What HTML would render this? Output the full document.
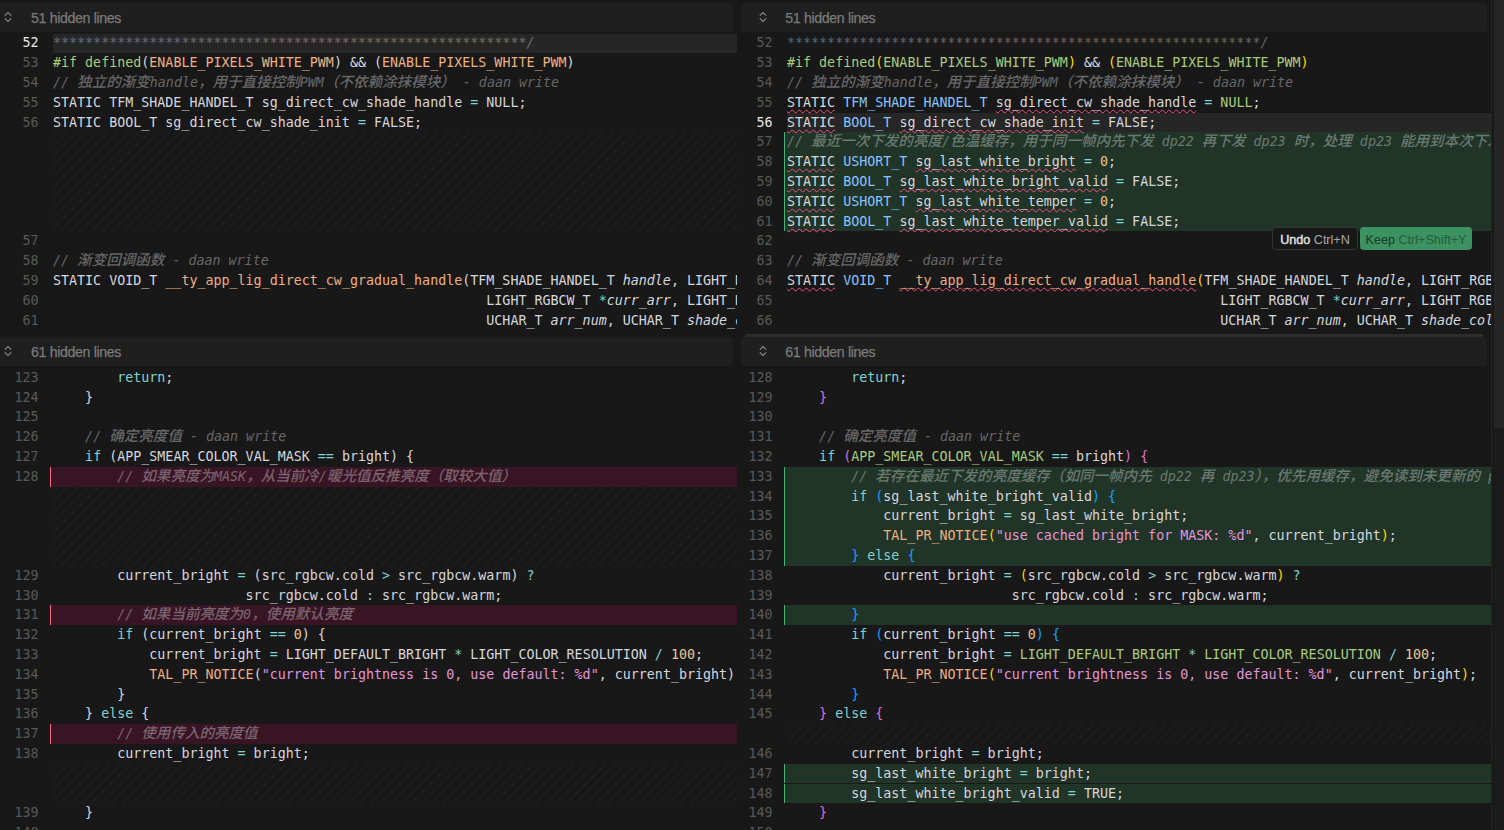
<!DOCTYPE html>
<html lang="zh"><head><meta charset="utf-8"><title>diff</title><style>
html,body{margin:0;padding:0;background:#181818;}
body{width:1504px;height:830px;overflow:hidden;position:relative;font-family:"DejaVu Sans Mono","Liberation Mono",monospace;}
.pane{position:absolute;top:0;height:830px;overflow:hidden;}
.inner{position:absolute;top:0;height:830px;width:2000px;}
#lp{left:0;width:737px;}
#lp .inner{left:0}
#rp{left:741px;width:750px;}
#rp .inner{left:-7px}
.cl,.ln{position:absolute;height:18.8px;line-height:18.8px;font-size:13.333px;white-space:pre;color:#d6d6dd;}
.cl{left:53px;}
.ln{left:0;width:38.5px;text-align:right;color:#585858;}
.ln.act{color:#e8e8e8;}
.c{font-family:"Noto Sans CJK SC","WenQuanYi Zen Hei",sans-serif;font-size:14.55px;line-height:0;font-weight:500;}
.bg{position:absolute;right:0;}
.curbg{left:53px;background:#262626;}
.addbg{left:50px;background:#203428;border-left:1px solid #43b475;}
.delbg{left:50px;background:#381424;border-left:1px solid #f86a84;}
.hatch{position:absolute;left:53px;right:0;background:repeating-linear-gradient(-45deg,#181818 0,#181818 5.1px,#1e1e1e 5.9px,#1e1e1e 6.6px,#181818 7.3px);}
.k,.o{color:#82d2ce}
.n{color:#ebc88d}
.s{color:#e394dc}
.f{color:#efb080}
.t{color:#87c3ff}
.m{color:#a8cc7c}
.cm{color:rgba(255,255,255,0.35);font-style:italic}
.i{font-style:italic}
.b1{color:#ffd700}.b2{color:#da70d6}.b3{color:#179fff}
.q{text-decoration:underline wavy #f04f84;text-decoration-thickness:1.1px;text-underline-offset:1.9px;text-decoration-skip-ink:none}
.hdr{position:absolute;height:29px;background:#1f1f1f;font-family:"Liberation Sans",sans-serif;color:#7a7a7a;font-size:14.2px;letter-spacing:-0.36px;line-height:28px;}
.chev{position:absolute;left:4px;top:8.5px}
.ht{position:absolute;left:31px;top:1px;-webkit-text-stroke:0.25px #7a7a7a;white-space:nowrap}
.btn{position:absolute;top:227px;height:23px;box-sizing:border-box;border-radius:4px;font-family:"Liberation Sans",sans-serif;font-size:12.6px;line-height:23px;white-space:nowrap;text-align:center;padding-top:1.5px;overflow:hidden}
</style></head><body>
<div class="pane" id="lp"><div class="inner">
<div class="bg curbg" style="top:34px;height:19px"></div>
<div class="hatch" style="top:132px;height:99px"></div>
<div class="ln act" style="top:34px">52</div>
<div class="cl" style="top:34px"><span class="cm">***********************************************************/</span></div>
<div class="ln" style="top:54px">53</div>
<div class="cl" style="top:54px"><span class="m">#if defined</span>(<span class="f">ENABLE_PIXELS_WHITE_PWM</span>) &amp;&amp; (<span class="f">ENABLE_PIXELS_WHITE_PWM</span>)</div>
<div class="ln" style="top:74px">54</div>
<div class="cl" style="top:74px"><span class="cm">// <span class="c">独立的渐变</span>handle<span class="c">，用于直接控制</span>PWM<span class="c">（不依赖涂抹模块）</span> - daan write</span></div>
<div class="ln" style="top:94px">55</div>
<div class="cl" style="top:94px">STATIC TFM_SHADE_HANDEL_T sg_direct_cw_shade_handle <span class="o">=</span> NULL;</div>
<div class="ln" style="top:114px">56</div>
<div class="cl" style="top:114px">STATIC BOOL_T sg_direct_cw_shade_init <span class="o">=</span> FALSE;</div>
<div class="ln" style="top:232px">57</div>
<div class="ln" style="top:252px">58</div>
<div class="cl" style="top:252px"><span class="cm">// <span class="c">渐变回调函数</span> - daan write</span></div>
<div class="ln" style="top:272px">59</div>
<div class="cl" style="top:272px">STATIC VOID_T <span class="f">__ty_app_lig_direct_cw_gradual_handle</span>(TFM_SHADE_HANDEL_T <span class="i">handle</span>, LIGHT_RGBCW_T <span class="o">*</span><span class="i">curr_arr</span>,</div>
<div class="ln" style="top:292px">60</div>
<div class="cl" style="top:292px">                                                      LIGHT_RGBCW_T <span class="o">*</span><span class="i">curr_arr</span>, LIGHT_RGBCW_T <span class="o">*</span><span class="i">target_arr</span>,</div>
<div class="ln" style="top:312px">61</div>
<div class="cl" style="top:312px">                                                      UCHAR_T <span class="i">arr_num</span>, UCHAR_T <span class="i">shade_color_num</span>)</div>
<div class="bg delbg" style="top:467px;height:20px"></div>
<div class="bg delbg" style="top:605px;height:20px"></div>
<div class="bg delbg" style="top:724px;height:20px"></div>
<div class="hatch" style="top:487px;height:79px"></div>
<div class="hatch" style="top:764px;height:39px"></div>
<div class="ln" style="top:369px">123</div>
<div class="cl" style="top:369px">        <span class="k">return</span>;</div>
<div class="ln" style="top:389px">124</div>
<div class="cl" style="top:389px">    }</div>
<div class="ln" style="top:408px">125</div>
<div class="ln" style="top:428px">126</div>
<div class="cl" style="top:428px">    <span class="cm">// <span class="c">确定亮度值</span> - daan write</span></div>
<div class="ln" style="top:448px">127</div>
<div class="cl" style="top:448px">    <span class="k">if</span> (APP_SMEAR_COLOR_VAL_MASK <span class="o">==</span> bright) {</div>
<div class="ln" style="top:468px">128</div>
<div class="cl" style="top:468px">        <span class="cm">// <span class="c">如果亮度为</span>MASK<span class="c">，从当前冷</span>/<span class="c">暖光值反推亮度（取较大值）</span></span></div>
<div class="ln" style="top:567px">129</div>
<div class="cl" style="top:567px">        current_bright <span class="o">=</span> (src_rgbcw.cold <span class="o">&gt;</span> src_rgbcw.warm) <span class="o">?</span></div>
<div class="ln" style="top:587px">130</div>
<div class="cl" style="top:587px">                        src_rgbcw.cold <span class="o">:</span> src_rgbcw.warm;</div>
<div class="ln" style="top:606px">131</div>
<div class="cl" style="top:606px">        <span class="cm">// <span class="c">如果当前亮度为</span>0<span class="c">，使用默认亮度</span></span></div>
<div class="ln" style="top:626px">132</div>
<div class="cl" style="top:626px">        <span class="k">if</span> (current_bright <span class="o">==</span> <span class="n">0</span>) {</div>
<div class="ln" style="top:646px">133</div>
<div class="cl" style="top:646px">            current_bright <span class="o">=</span> LIGHT_DEFAULT_BRIGHT <span class="o">*</span> LIGHT_COLOR_RESOLUTION <span class="o">/</span> <span class="n">100</span>;</div>
<div class="ln" style="top:666px">134</div>
<div class="cl" style="top:666px">            <span class="f">TAL_PR_NOTICE</span>(<span class="s">"current brightness is 0, use default: %d"</span>, current_bright);</div>
<div class="ln" style="top:686px">135</div>
<div class="cl" style="top:686px">        }</div>
<div class="ln" style="top:705px">136</div>
<div class="cl" style="top:705px">    } <span class="k">else</span> {</div>
<div class="ln" style="top:725px">137</div>
<div class="cl" style="top:725px">        <span class="cm">// <span class="c">使用传入的亮度值</span></span></div>
<div class="ln" style="top:745px">138</div>
<div class="cl" style="top:745px">        current_bright <span class="o">=</span> bright;</div>
<div class="ln" style="top:804px">139</div>
<div class="cl" style="top:804px">    }</div>
<div class="ln" style="top:824px">140</div>
</div></div>
<div class="pane" id="rp"><div class="inner">
<div class="bg curbg" style="top:113px;height:19px"></div>
<div class="bg addbg" style="top:132px;height:20px"></div>
<div class="bg addbg" style="top:152px;height:20px"></div>
<div class="bg addbg" style="top:172px;height:20px"></div>
<div class="bg addbg" style="top:192px;height:20px"></div>
<div class="bg addbg" style="top:212px;height:19px"></div>
<div class="ln" style="top:34px">52</div>
<div class="cl" style="top:34px"><span class="cm">***********************************************************/</span></div>
<div class="ln" style="top:54px">53</div>
<div class="cl" style="top:54px"><span class="m">#if defined</span><span class="b1">(</span><span class="m">ENABLE_PIXELS_WHITE_PWM</span><span class="b1">)</span> &amp;&amp; <span class="b1">(</span><span class="m">ENABLE_PIXELS_WHITE_PWM</span><span class="b1">)</span></div>
<div class="ln" style="top:74px">54</div>
<div class="cl" style="top:74px"><span class="cm">// <span class="c">独立的渐变</span>handle<span class="c">，用于直接控制</span>PWM<span class="c">（不依赖涂抹模块）</span> - daan write</span></div>
<div class="ln" style="top:94px">55</div>
<div class="cl" style="top:94px"><span class="q">STATIC</span> <span class="t">TFM_SHADE_HANDEL_T</span> <span class="q">sg_direct_cw_shade_handle</span> <span class="o">=</span> <span class="m">NULL</span>;</div>
<div class="ln act" style="top:114px">56</div>
<div class="cl" style="top:114px"><span class="q">STATIC</span> <span class="t">BOOL_T</span> <span class="q">sg_direct_cw_shade_init</span> <span class="o">=</span> FALSE;</div>
<div class="ln" style="top:133px">57</div>
<div class="cl" style="top:133px"><span class="cm">// <span class="c">最近一次下发的亮度</span>/<span class="c">色温缓存，用于同一帧内先下发</span> dp22 <span class="c">再下发</span> dp23 <span class="c">时，处理</span> dp23 <span class="c">能用到本次下发的值</span></span></div>
<div class="ln" style="top:153px">58</div>
<div class="cl" style="top:153px"><span class="q">STATIC</span> <span class="t">USHORT_T</span> <span class="q">sg_last_white_bright</span> <span class="o">=</span> <span class="n">0</span>;</div>
<div class="ln" style="top:173px">59</div>
<div class="cl" style="top:173px"><span class="q">STATIC</span> <span class="t">BOOL_T</span> <span class="q">sg_last_white_bright_valid</span> <span class="o">=</span> FALSE;</div>
<div class="ln" style="top:193px">60</div>
<div class="cl" style="top:193px"><span class="q">STATIC</span> <span class="t">USHORT_T</span> <span class="q">sg_last_white_temper</span> <span class="o">=</span> <span class="n">0</span>;</div>
<div class="ln" style="top:213px">61</div>
<div class="cl" style="top:213px"><span class="q">STATIC</span> <span class="t">BOOL_T</span> <span class="q">sg_last_white_temper_valid</span> <span class="o">=</span> FALSE;</div>
<div class="ln" style="top:232px">62</div>
<div class="ln" style="top:252px">63</div>
<div class="cl" style="top:252px"><span class="cm">// <span class="c">渐变回调函数</span> - daan write</span></div>
<div class="ln" style="top:272px">64</div>
<div class="cl" style="top:272px"><span class="q">STATIC</span> <span class="t">VOID_T</span> <span class="q f">__ty_app_lig_direct_cw_gradual_handle</span><span class="b1">(</span>TFM_SHADE_HANDEL_T <span class="i">handle</span>, LIGHT_RGBCW_T <span class="o">*</span><span class="i">curr_arr</span>,</div>
<div class="ln" style="top:292px">65</div>
<div class="cl" style="top:292px">                                                      LIGHT_RGBCW_T <span class="o">*</span><span class="i">curr_arr</span>, LIGHT_RGBCW_T <span class="o">*</span><span class="i">target_arr</span>,</div>
<div class="ln" style="top:312px">66</div>
<div class="cl" style="top:312px">                                                      UCHAR_T <span class="i">arr_num</span>, UCHAR_T <span class="i">shade_color_num</span><span class="b1">)</span></div>
<div class="bg addbg" style="top:467px;height:20px"></div>
<div class="bg addbg" style="top:487px;height:19px"></div>
<div class="bg addbg" style="top:506px;height:20px"></div>
<div class="bg addbg" style="top:526px;height:20px"></div>
<div class="bg addbg" style="top:546px;height:20px"></div>
<div class="bg addbg" style="top:605px;height:20px"></div>
<div class="bg addbg" style="top:764px;height:19px"></div>
<div class="bg addbg" style="top:784px;height:19px"></div>
<div class="hatch" style="top:724px;height:20px"></div>
<div class="ln" style="top:369px">128</div>
<div class="cl" style="top:369px">        <span class="k">return</span>;</div>
<div class="ln" style="top:389px">129</div>
<div class="cl" style="top:389px">    <span class="b2">}</span></div>
<div class="ln" style="top:408px">130</div>
<div class="ln" style="top:428px">131</div>
<div class="cl" style="top:428px">    <span class="cm">// <span class="c">确定亮度值</span> - daan write</span></div>
<div class="ln" style="top:448px">132</div>
<div class="cl" style="top:448px">    <span class="k">if</span> <span class="b2">(</span><span class="m">APP_SMEAR_COLOR_VAL_MASK</span> <span class="o">==</span> bright<span class="b2">)</span> <span class="b2">{</span></div>
<div class="ln" style="top:468px">133</div>
<div class="cl" style="top:468px">        <span class="cm">// <span class="c">若存在最近下发的亮度缓存（如同一帧内先</span> dp22 <span class="c">再</span> dp23<span class="c">），优先用缓存，避免读到未更新的</span> pixel <span class="c">值</span></span></div>
<div class="ln" style="top:488px">134</div>
<div class="cl" style="top:488px">        <span class="k">if</span> <span class="b3">(</span>sg_last_white_bright_valid<span class="b3">)</span> <span class="b3">{</span></div>
<div class="ln" style="top:507px">135</div>
<div class="cl" style="top:507px">            current_bright <span class="o">=</span> sg_last_white_bright;</div>
<div class="ln" style="top:527px">136</div>
<div class="cl" style="top:527px">            <span class="f">TAL_PR_NOTICE</span><span class="b1">(</span><span class="s">"use cached bright for MASK: %d"</span>, current_bright<span class="b1">)</span>;</div>
<div class="ln" style="top:547px">137</div>
<div class="cl" style="top:547px">        <span class="b3">}</span> <span class="k">else</span> <span class="b3">{</span></div>
<div class="ln" style="top:567px">138</div>
<div class="cl" style="top:567px">            current_bright <span class="o">=</span> <span class="b1">(</span>src_rgbcw.cold <span class="o">&gt;</span> src_rgbcw.warm<span class="b1">)</span> <span class="o">?</span></div>
<div class="ln" style="top:587px">139</div>
<div class="cl" style="top:587px">                            src_rgbcw.cold <span class="o">:</span> src_rgbcw.warm;</div>
<div class="ln" style="top:606px">140</div>
<div class="cl" style="top:606px">        <span class="b3">}</span></div>
<div class="ln" style="top:626px">141</div>
<div class="cl" style="top:626px">        <span class="k">if</span> <span class="b3">(</span>current_bright <span class="o">==</span> <span class="n">0</span><span class="b3">)</span> <span class="b3">{</span></div>
<div class="ln" style="top:646px">142</div>
<div class="cl" style="top:646px">            current_bright <span class="o">=</span> <span class="m">LIGHT_DEFAULT_BRIGHT</span> <span class="o">*</span> <span class="m">LIGHT_COLOR_RESOLUTION</span> <span class="o">/</span> <span class="n">100</span>;</div>
<div class="ln" style="top:666px">143</div>
<div class="cl" style="top:666px">            <span class="f">TAL_PR_NOTICE</span><span class="b1">(</span><span class="s">"current brightness is 0, use default: %d"</span>, current_bright<span class="b1">)</span>;</div>
<div class="ln" style="top:686px">144</div>
<div class="cl" style="top:686px">        <span class="b3">}</span></div>
<div class="ln" style="top:705px">145</div>
<div class="cl" style="top:705px">    <span class="b2">}</span> <span class="k">else</span> <span class="b2">{</span></div>
<div class="ln" style="top:745px">146</div>
<div class="cl" style="top:745px">        current_bright <span class="o">=</span> bright;</div>
<div class="ln" style="top:765px">147</div>
<div class="cl" style="top:765px">        sg_last_white_bright <span class="o">=</span> bright;</div>
<div class="ln" style="top:785px">148</div>
<div class="cl" style="top:785px">        sg_last_white_bright_valid <span class="o">=</span> TRUE;</div>
<div class="ln" style="top:804px">149</div>
<div class="cl" style="top:804px">    <span class="b2">}</span></div>
<div class="ln" style="top:824px">150</div>
</div></div>
<div class="hdr" style="left:0;width:733px;top:3px;border-radius:0 4px 4px 0"><svg class="chev" viewBox="0 0 8 10" width="8" height="10"><path d="M0.8 3.6 L4 0.6 L7.2 3.6 M0.8 6.4 L4 9.4 L7.2 6.4" fill="none" stroke="#8a8a8a" stroke-width="1.2"/></svg><span class="ht">51 hidden lines</span></div>
<div class="hdr" style="left:0;width:733px;top:337px;border-radius:0 4px 4px 0"><svg class="chev" viewBox="0 0 8 10" width="8" height="10"><path d="M0.8 3.6 L4 0.6 L7.2 3.6 M0.8 6.4 L4 9.4 L7.2 6.4" fill="none" stroke="#8a8a8a" stroke-width="1.2"/></svg><span class="ht">61 hidden lines</span></div>
<div class="hdr" style="left:741px;width:746px;top:3px;border-radius:4px"><svg class="chev" style="left:18px" viewBox="0 0 8 10" width="8" height="10"><path d="M0.8 3.6 L4 0.6 L7.2 3.6 M0.8 6.4 L4 9.4 L7.2 6.4" fill="none" stroke="#8a8a8a" stroke-width="1.2"/></svg><span class="ht" style="left:44.3px">51 hidden lines</span></div>
<div class="hdr" style="left:741px;width:746px;top:337px;border-radius:4px"><svg class="chev" style="left:18px" viewBox="0 0 8 10" width="8" height="10"><path d="M0.8 3.6 L4 0.6 L7.2 3.6 M0.8 6.4 L4 9.4 L7.2 6.4" fill="none" stroke="#8a8a8a" stroke-width="1.2"/></svg><span class="ht" style="left:44.3px">61 hidden lines</span></div>
<div style="position:absolute;left:745px;top:334px;width:738px;height:3px;background:#2c2c2c"></div>
<div style="position:absolute;left:1491px;top:0;width:1px;height:830px;background:#232323"></div>
<div style="position:absolute;left:1494px;top:0;width:10px;height:830px;background:#1b1b1b"></div>
<div style="position:absolute;left:1494px;top:0;width:10px;height:428px;background:#262626"></div>
<div class="btn" style="left:1272px;width:86px;background:#181818;border:1px solid #343434;color:#a8a8a8;line-height:21px"><span style="color:#e4e4e4;-webkit-text-stroke:0.4px #e4e4e4">Undo</span> Ctrl+N</div>
<div class="btn" style="left:1360px;width:112px;background:#3c9261;color:#245c3e"><span style="color:#1b3a28">Keep</span> Ctrl+Shift+Y</div>
</body></html>
